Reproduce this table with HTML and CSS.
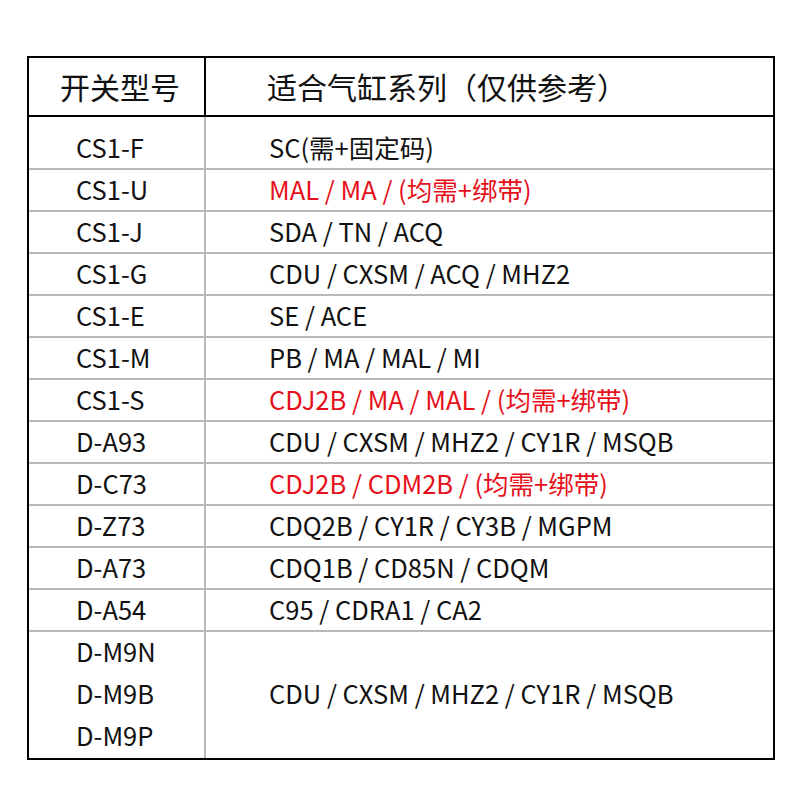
FILE: index.html
```html
<!DOCTYPE html>
<html lang="zh-CN">
<head>
<meta charset="utf-8">
<link rel="stylesheet" href="styles.css">
</head>
<body>
<div class="table">
  <div class="row head">
    <div class="c1">开关型号</div>
    <div class="c2">适合气缸系列（仅供参考）</div>
  </div>
  <div class="row first"><div class="c1">CS1-F</div><div class="c2">SC(需+固定码)</div></div>
  <div class="row"><div class="c1">CS1-U</div><div class="c2 red">MAL / MA / (均需+绑带)</div></div>
  <div class="row"><div class="c1">CS1-J</div><div class="c2">SDA / TN / ACQ</div></div>
  <div class="row"><div class="c1">CS1-G</div><div class="c2">CDU / CXSM / ACQ / MHZ2</div></div>
  <div class="row"><div class="c1">CS1-E</div><div class="c2">SE / ACE</div></div>
  <div class="row"><div class="c1">CS1-M</div><div class="c2">PB / MA / MAL / MI</div></div>
  <div class="row"><div class="c1">CS1-S</div><div class="c2 red">CDJ2B / MA / MAL / (均需+绑带)</div></div>
  <div class="row"><div class="c1">D-A93</div><div class="c2">CDU / CXSM / MHZ2 / CY1R / MSQB</div></div>
  <div class="row"><div class="c1">D-C73</div><div class="c2 red">CDJ2B / CDM2B / (均需+绑带)</div></div>
  <div class="row"><div class="c1">D-Z73</div><div class="c2">CDQ2B / CY1R / CY3B / MGPM</div></div>
  <div class="row"><div class="c1">D-A73</div><div class="c2">CDQ1B / CD85N / CDQM</div></div>
  <div class="row"><div class="c1">D-A54</div><div class="c2">C95 / CDRA1 / CA2</div></div>
  <div class="row last">
    <div class="c1 multi"><span>D-M9N</span><span>D-M9B</span><span>D-M9P</span></div>
    <div class="c2">CDU / CXSM / MHZ2 / CY1R / MSQB</div>
  </div>
</div>
</body>
</html>
```
FILE: styles.css
```css
html, body {
  margin: 0;
  padding: 0;
  background: #fff;
}
body {
  padding: 56px 0 0 27px;
  font-family: "Noto Sans CJK SC", "Noto Sans", sans-serif;
  color: #111;
}
.table {
  width: 748px;
  border: 2px solid #000;
  box-sizing: border-box;
}
.row {
  display: flex;
  height: 42px;
  border-bottom: 2px solid #b9b9b9;
  box-sizing: border-box;
  font-size: 25.5px;
  line-height: 38px;
}
.c1 {
  width: 177px;
  flex: none;
  box-sizing: border-box;
  border-right: 2px solid #b9b9b9;
  padding-left: 47px;
}
.c2 {
  flex: 1;
  padding-left: 63px;
  white-space: nowrap;
}
.red {
  color: #e60f1a;
}
.head {
  height: 59px;
  border-bottom: 2px solid #000;
  font-size: 30px;
  line-height: 56px;
}
.head .c1 {
  border-right-color: #000;
  padding-left: 31px;
}
.head .c2 {
  padding-left: 61px;
}
.first {
  height: 53px;
}
.first .c1,
.first .c2 {
  padding-top: 11px;
  line-height: 38px;
}
.last {
  height: 126px;
  border-bottom: none;
}
.last .c1 {
  display: flex;
  flex-direction: column;
  line-height: 42px;
}
.last .c1 span {
  position: relative;
  top: -2px;
}
.last .c2 {
  display: flex;
  align-items: center;
  box-sizing: border-box;
  padding-bottom: 4px;
}
```
